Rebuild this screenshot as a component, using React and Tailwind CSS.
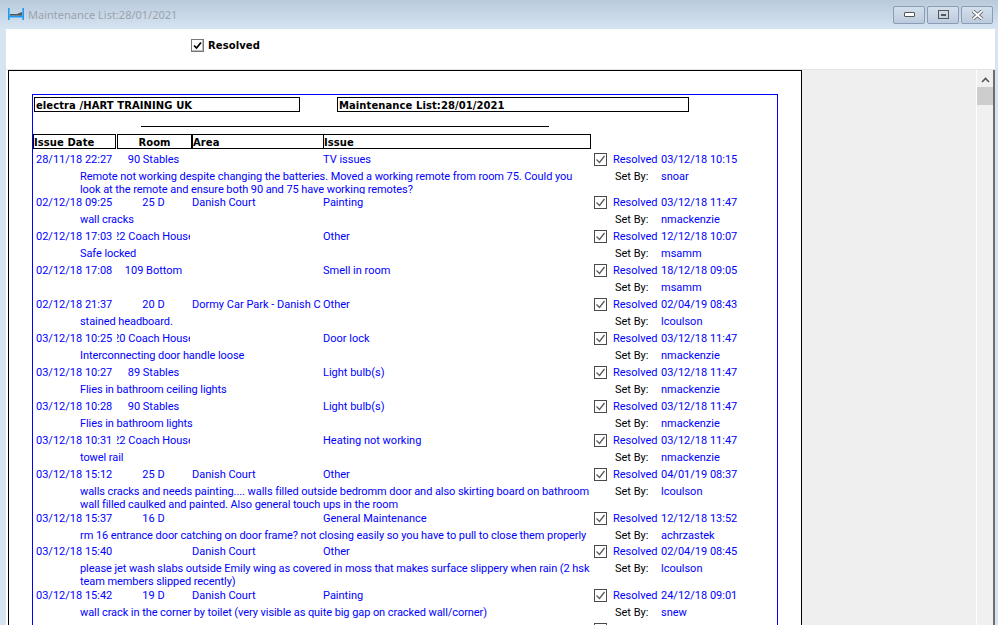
const rows = [
  { date: "28/11/18 22:27", room: "90 Stables", area: "", issue: "TV issues", res: "03/12/18 10:15", by: "snoar", h: "h-[43px]",
    desc: "Remote not working despite changing the batteries. Moved a working remote from room 75. Could you look at the remote and ensure both 90 and 75 have working remotes?" },
  { date: "02/12/18 09:25", room: "25 D", area: "Danish Court", issue: "Painting", res: "03/12/18 11:47", by: "nmackenzie", h: "h-[34px]", desc: "wall cracks" },
  { date: "02/12/18 17:03", room: "22 Coach House", area: "", issue: "Other", res: "12/12/18 10:07", by: "msamm", h: "h-[34px]", desc: "Safe locked" },
  { date: "02/12/18 17:08", room: "109 Bottom", area: "", issue: "Smell in room", res: "18/12/18 09:05", by: "msamm", h: "h-[34px]", desc: "" },
  { date: "02/12/18 21:37", room: "20 D", area: "Dormy Car Park - Danish Court", issue: "Other", res: "02/04/19 08:43", by: "lcoulson", h: "h-[34px]", desc: "stained headboard." },
  { date: "03/12/18 10:25", room: "20 Coach House", area: "", issue: "Door lock", res: "03/12/18 11:47", by: "nmackenzie", h: "h-[34px]", desc: "Interconnecting door handle loose" },
  { date: "03/12/18 10:27", room: "89 Stables", area: "", issue: "Light bulb(s)", res: "03/12/18 11:47", by: "nmackenzie", h: "h-[34px]", desc: "Flies in bathroom ceiling lights" },
  { date: "03/12/18 10:28", room: "90 Stables", area: "", issue: "Light bulb(s)", res: "03/12/18 11:47", by: "nmackenzie", h: "h-[34px]", desc: "Flies in bathroom lights" },
  { date: "03/12/18 10:31", room: "22 Coach House", area: "", issue: "Heating not working", res: "03/12/18 11:47", by: "nmackenzie", h: "h-[34px]", desc: "towel rail" },
  { date: "03/12/18 15:12", room: "25 D", area: "Danish Court", issue: "Other", res: "04/01/19 08:37", by: "lcoulson", h: "h-[44px]",
    desc: "walls cracks and needs painting.... walls filled outside bedromm door and also skirting board on bathroom wall filled caulked and painted. Also general touch ups in the room" },
  { date: "03/12/18 15:37", room: "16 D", area: "", issue: "General Maintenance", res: "12/12/18 13:52", by: "achrzastek", h: "h-[33px]",
    desc: "rm 16 entrance door catching on door frame? not closing easily so you have to pull to close them properly" },
  { date: "03/12/18 15:40", room: "", area: "Danish Court", issue: "Other", res: "02/04/19 08:45", by: "lcoulson", h: "h-[44px]",
    desc: "please jet wash slabs outside Emily wing as covered in moss that makes surface slippery when rain (2 hsk team members slipped recently)" },
  { date: "03/12/18 15:42", room: "19 D", area: "Danish Court", issue: "Painting", res: "24/12/18 09:01", by: "snew", h: "h-[34px]",
    desc: "wall crack in the corner by toilet (very visible as quite big gap on cracked wall/corner)" },
  { date: "03/12/18 15:45", room: "12 D", area: "Danish Court", issue: "Painting", res: "24/12/18 09:01", by: "snew", h: "h-[34px]", desc: "" },
];

function TickBox({ className }) {
  return (
    <svg width="13" height="13" viewBox="0 0 13 13" className={className}>
      <rect x="0.5" y="0.5" width="12" height="12" fill="#fff" stroke="#4a4a4a" />
      <path d="M2.5 6.5l3 3 5-6.5" fill="none" stroke="#5a5a5a" strokeWidth="1.3" />
    </svg>
  );
}

function WinButton({ children, className = "" }) {
  return (
    <div className={`h-[18px] flex items-center justify-center rounded-[2px] border border-[#8c9cb5] bg-gradient-to-b from-[#d3dfec] to-[#bccbdd] ${className}`}>
      {children}
    </div>
  );
}

function Row({ row }) {
  return (
    <div className={`grid grid-cols-[559px_1fr] overflow-hidden text-[#0000ff] ${row.h}`}>
      <div>
        <div className="grid h-[17px] grid-cols-[83px_73px_133px_270px] items-center">
          <div className="pl-[2px] whitespace-nowrap">{row.date}</div>
          <div className="flex justify-center overflow-hidden whitespace-nowrap">{row.room}</div>
          <div className="ml-[2px] mr-[2px] overflow-hidden whitespace-nowrap">{row.area}</div>
          <div className="whitespace-nowrap">{row.issue}</div>
        </div>
        <div className="ml-[46px] w-[512px] pt-[2px] leading-[13px] tracking-[-0.07px]">{row.desc}</div>
      </div>
      <div>
        <div className="flex h-[17px] items-center">
          <TickBox className="ml-[1px] mr-[6px] shrink-0" />
          <span className="w-[48px] whitespace-nowrap">Resolved</span>
          <span className="whitespace-nowrap">{row.res}</span>
        </div>
        <div className="flex pt-[2px] leading-[13px]">
          <span className="ml-[22px] w-[46px] text-black">Set By:</span>
          <span>{row.by}</span>
        </div>
      </div>
    </div>
  );
}

export default function App() {
  return (
    <div className="flex h-[625px] w-[998px] flex-col overflow-hidden bg-[#d6e4f2] text-[11px] leading-[13px] font-['Roboto',sans-serif]">
      {/* title bar */}
      <div className="flex h-[29px] shrink-0 items-center bg-gradient-to-b from-[#b9cadb] to-[#d6e4f2] pl-[8px] pr-[5px]">
        <svg width="16" height="12" viewBox="0 0 16 12" className="mt-[-2px]">
          <path d="M0.8 0v12M15.2 0v12" stroke="#1e9bf0" strokeWidth="1.6" />
          <path d="M1 8.5h14" stroke="#1e9bf0" strokeWidth="2" />
          <path d="M2 7.5V6h7l5-2v3.5z" fill="#555" />
        </svg>
        <span className="ml-[4px] font-['Noto_Sans',sans-serif] text-[11px] text-[#9aa3ac]">Maintenance List:28/01/2021</span>
        <div className="ml-auto flex gap-[2px]">
          <WinButton className="w-[32px]">
            <div className="h-[5px] w-[11px] rounded-[1px] border border-[#555] bg-white" />
          </WinButton>
          <WinButton className="w-[32px]">
            <div className="flex h-[9px] w-[11px] items-center justify-center border-[1.5px] border-[#555]">
              <div className="h-[2px] w-[5px] bg-[#555]" />
            </div>
          </WinButton>
          <WinButton className="w-[32px]">
            <svg width="13" height="10" viewBox="0 0 13 10">
              <path d="M2 1l9 8M11 1l-9 8" stroke="#555" strokeWidth="3.4" />
              <path d="M2 1l9 8M11 1l-9 8" stroke="#fff" strokeWidth="1.8" />
            </svg>
          </WinButton>
        </div>
      </div>

      <div className="ml-[6px] mr-[3px] flex min-h-0 flex-1 flex-col bg-white">
        {/* filter bar */}
        <div className="flex h-[41px] shrink-0 items-center border-b border-[#e3e3e3] pb-[7px] pl-[185px]">
          <div className="flex h-[13px] w-[13px] items-center justify-center border border-[#777] bg-white shadow-[inset_-1px_-1px_0_#bbb]">
            <svg width="9" height="9" viewBox="0 0 9 9">
              <path d="M1 4.5l2.5 2.5L8 1.5" fill="none" stroke="#000" strokeWidth="1.7" />
            </svg>
          </div>
          <span className="ml-[4px] font-['DejaVu_Sans',sans-serif] text-[10px] font-bold tracking-[0.1px]">Resolved</span>
        </div>

        {/* scroll area */}
        <div className="flex min-h-0 flex-1 overflow-hidden">
          <div className="ml-[2px] w-[794px] shrink-0 border-[1.5px] border-b-0 border-black bg-white pl-[23px] pt-[23px]">
            <div className="h-[600px] w-[746px] border border-b-0 border-[#0000ff] pl-[1px] pt-[1px]">
              {/* report head */}
              <div className="mt-[1px] flex font-['DejaVu_Sans',sans-serif] text-[10px] font-bold tracking-[0.08px] text-black">
                <div className="h-[15px] w-[266px] border border-black pl-[1px] pt-[1px] leading-[13px]">electra /HART TRAINING UK</div>
                <div className="ml-[37px] h-[15px] w-[352px] border border-black pl-[1px] pt-[1px] leading-[13px]">Maintenance List:28/01/2021</div>
              </div>
              <div className="ml-[107px] mt-[14px] h-px w-[408px] bg-black" />
              <div className="ml-[-1px] mt-[7px] flex font-['DejaVu_Sans',sans-serif] text-[10px] font-bold tracking-[0.08px] text-black">
                <div className="h-[15px] w-[83px] border border-black pt-[1px] leading-[13px]">Issue Date</div>
                <div className="ml-px h-[15px] w-[75px] border border-black pt-[1px] text-center leading-[13px]">Room</div>
                <div className="h-[15px] w-[131px] border border-r-0 border-y-black border-l-black pt-[1px] leading-[13px]">Area</div>
                <div className="h-[15px] w-[268px] border border-black pt-[1px] leading-[13px]">Issue</div>
              </div>
              <div className="mt-[2px]">
                {rows.map((row, i) => (
                  <Row key={i} row={row} />
                ))}
              </div>
            </div>
          </div>

          <div className="flex-1 bg-[#efefef]" />

          {/* scrollbar */}
          <div className="flex w-[19px] shrink-0 flex-col items-center border-l border-r-2 border-l-white border-r-[#6e6e6e] bg-[#f0f0f0]">
            <svg width="9" height="6" viewBox="0 0 9 6" className="mt-[7px]">
              <path d="M1 5l3.5-3.5L8 5" fill="none" stroke="#555" strokeWidth="1.6" />
            </svg>
            <div className="mt-[4px] h-[18px] w-full bg-[#cdcdcd]" />
          </div>
        </div>
      </div>
    </div>
  );
}
